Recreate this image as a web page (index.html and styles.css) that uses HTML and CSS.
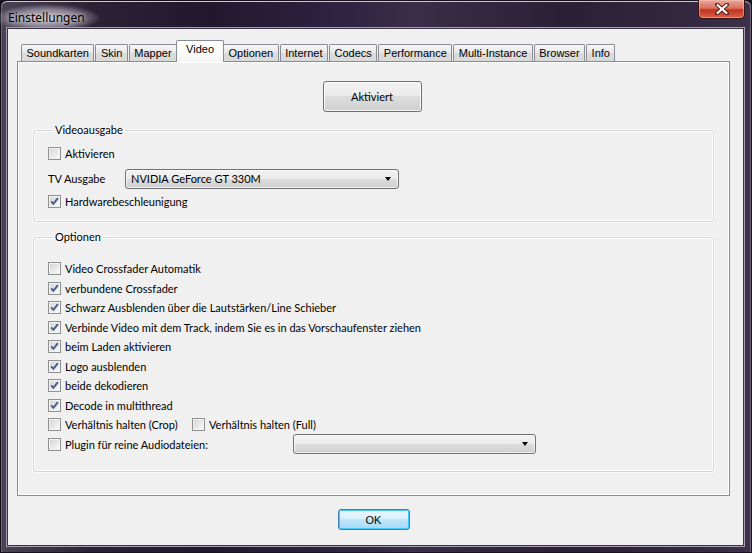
FILE: index.html
```html
<!DOCTYPE html>
<html>
   <head>
      <title>Einstellungen</title>
      <link rel="stylesheet" href="styles.css">
   </head>
   <body>
   <div class="window">
      <div class="titlebar">
         <span class="title">Einstellungen</span>
         <span class="close">
            <svg width="16" height="12" viewBox="0 0 16 12">
               <path d="M3 1.5 L13 10.5 M13 1.5 L3 10.5" stroke="#5a1d16" stroke-width="4" stroke-linecap="round"/>
               <path d="M3.5 2 L12.5 10 M12.5 2 L3.5 10" stroke="#fff" stroke-width="2.2" stroke-linecap="round"/>
            </svg>
         </span>
      </div>

      <div class="client">
         <div class="tabs">
            <span class="tab">Soundkarten</span>
            <span class="tab">Skin</span>
            <span class="tab">Mapper</span>
            <span class="tab active">Video</span>
            <span class="tab">Optionen</span>
            <span class="tab">Internet</span>
            <span class="tab">Codecs</span>
            <span class="tab">Performance</span>
            <span class="tab">Multi-Instance</span>
            <span class="tab">Browser</span>
            <span class="tab">Info</span>
         </div>

         <div class="page">
            <div class="top-row">
               <span class="btn btn-big">Aktiviert</span>
            </div>

            <fieldset class="group group-video">
               <legend>Videoausgabe</legend>
               <div class="row"><span class="box"></span>Aktivieren</div>
               <div class="row row-field">
                  <span class="field-label">TV Ausgabe</span>
                  <span class="combo combo-tv">NVIDIA GeForce GT 330M<span class="arrow"></span></span>
               </div>
               <div class="row"><span class="box on"></span>Hardwarebeschleunigung</div>
            </fieldset>

            <fieldset class="group group-options">
               <legend>Optionen</legend>
               <div class="row"><span class="box"></span>Video Crossfader Automatik</div>
               <div class="row"><span class="box on"></span>verbundene Crossfader</div>
               <div class="row"><span class="box on"></span>Schwarz Ausblenden über die Lautstärken/Line Schieber</div>
               <div class="row"><span class="box on"></span>Verbinde Video mit dem Track, indem Sie es in das Vorschaufenster ziehen</div>
               <div class="row"><span class="box on"></span>beim Laden aktivieren</div>
               <div class="row"><span class="box on"></span>Logo ausblenden</div>
               <div class="row"><span class="box on"></span>beide dekodieren</div>
               <div class="row"><span class="box on"></span>Decode in multithread</div>
               <div class="row">
                  <span class="pair"><span class="box"></span>Verhältnis halten (Crop)</span>
                  <span class="box"></span>Verhältnis halten (Full)
               </div>
               <div class="row">
                  <span class="pair pair-wide"><span class="box"></span>Plugin für reine Audiodateien:</span>
                  <span class="combo combo-plugin"><span class="arrow"></span></span>
               </div>
            </fieldset>
         </div>

         <div class="footer">
            <span class="btn btn-ok">OK</span>
         </div>
      </div>
   </div>
   </body>
</html>
```

FILE: styles.css
```css
body { margin:0; background:#1a1320; font-family:"Lato","Liberation Sans",sans-serif; font-size:11px; color:#000; }

/* window frame, dark aero glass */
.window { width:752px; height:553px; box-sizing:border-box; display:flex; flex-direction:column;
          border:1px solid #15101a; border-radius:7px 7px 0 0;
          background:linear-gradient(90deg,#4a4354 0%,#2c2236 12%,#22182e 28%,#2e2340 45%,#3a2e48 55%,#2a2036 75%,#33283f 92%,#3d3249 100%);
          box-shadow:inset 0 1px 0 #cfc8d6, inset 1px 0 0 #6d6478, inset -1px 0 0 #6d6478; }

.titlebar { height:28px; display:flex; justify-content:space-between; align-items:flex-start; }
.title { margin:3px 0 0 -8px; padding:5px 16px 6px 15px; font-family:"Noto Sans","Liberation Sans",sans-serif; font-size:12px;
         background:radial-gradient(closest-side,rgba(214,210,220,.9) 0%,rgba(190,185,198,.6) 60%,rgba(160,152,170,0) 100%);
         text-shadow:0 0 4px rgba(255,255,255,.7); }
.close { width:47px; height:19px; margin:-1px 6px 0 0; box-sizing:border-box; display:flex; align-items:center; justify-content:center;
         border:1px solid #3b1510; border-top:none; border-radius:0 0 5px 5px;
         background:linear-gradient(#e9a99c 0%,#d9715e 45%,#c2341d 55%,#d6614a 100%);
         box-shadow:inset 0 0 0 1px rgba(255,200,190,.5); }

.client { flex:1; margin:0 8px 7px 7px; background:#f0f0f0; display:flex; flex-direction:column;
          padding:11px 13px 0 9px; box-shadow:0 0 0 1px #3e3449, 0 0 0 2px #a59cb0; }

/* tab strip */
.tabs { height:21px; display:flex; align-items:flex-end; padding-left:4px; font-family:"Liberation Sans",sans-serif; font-size:11px; }
.tab { height:17px; line-height:16px; padding:0 4.5px; margin-right:1px; border:1px solid #898c95; border-bottom:none;
       border-radius:2px 2px 0 0; background:linear-gradient(#f7f7f7,#e6e6e6 50%,#dcdcdc 51%,#d9d9d9); box-sizing:border-box; }
.tab.active { height:22px; line-height:17px; margin:0 -1px -1px -2px; padding:0 9px; background:linear-gradient(#fff,#f6f6f6); position:relative; z-index:1; }

/* tab page */
.page { flex:1; border:1px solid #898c95; padding:19px 15px 0 15px; box-shadow:inset 0 0 0 1px #fff; }
.top-row { display:flex; justify-content:center; margin-bottom:11px; }

.btn { display:flex; align-items:center; justify-content:center; box-sizing:border-box; border:1px solid #707070; border-radius:3px;
       background:linear-gradient(#f2f2f2 0%,#ebebeb 49%,#dddddd 50%,#cfcfcf 100%); box-shadow:inset 0 0 0 1px rgba(255,255,255,.8); }
.btn-big { width:99px; height:31px; margin-left:-3px; }
.btn-ok { width:72px; height:21px; border-color:#3c7fb1; font-family:"Liberation Sans",sans-serif; font-size:11px;
          background:linear-gradient(#eaf6fd 0%,#d9f0fc 49%,#bee6fd 50%,#a7d9f5 100%); box-shadow:inset 0 0 0 1px #48c6f5; }

/* group boxes */
.group { margin:0; padding:0 14px; border:1px solid #d5d5d5; border-radius:3px; box-shadow:inset 0 0 0 1px #fff, 0 0 0 1px #fbfbfb; }
.group legend { padding:0 2px; margin-left:5px; line-height:14px; }
.group-video { padding-top:7px; padding-bottom:10px; }
.group-options { margin-top:8px; padding-top:15px; padding-bottom:17px; }

.row { height:19.5px; display:flex; align-items:center; white-space:nowrap; }
.row-field { height:26px; margin-top:2px; }
.field-label { width:77px; }
.pair { display:flex; align-items:center; width:144px; }
.pair-wide { width:245px; }

/* checkbox */
.box { width:13px; height:13px; box-sizing:border-box; margin-right:4px; flex:none; border:1px solid #8e8f8f;
       background:linear-gradient(135deg,#d3d3d3 0%,#ebebeb 60%,#fdfdfd 100%); box-shadow:inset 0 0 0 1px #f4f4f4; }
.box.on { background:url("data:image/svg+xml,%3Csvg xmlns='http://www.w3.org/2000/svg' width='11' height='11'%3E%3Cpath d='M2.2 5.4 L4.4 7.8 L8.9 2.2' fill='none' stroke='%234a5d8c' stroke-width='2'/%3E%3C/svg%3E") center no-repeat,
                    linear-gradient(135deg,#d3d3d3 0%,#ebebeb 60%,#fdfdfd 100%); }

/* drop-down lists */
.combo { position:relative; height:20px; box-sizing:border-box; display:flex; align-items:center; padding-left:5px;
         border:1px solid #707070; border-radius:3px; background:linear-gradient(#f2f2f2 0%,#ebebeb 49%,#dddddd 50%,#cfcfcf 100%);
         box-shadow:inset 0 0 0 1px rgba(255,255,255,.7); }
.combo-tv { width:274px; }
.combo-plugin { width:243px; }
.arrow { position:absolute; right:7px; top:7px; border-left:3.5px solid transparent; border-right:3.5px solid transparent; border-top:4px solid #000; }

.footer { height:49px; display:flex; justify-content:center; align-items:flex-start; padding-top:13px; box-sizing:border-box; }
```
